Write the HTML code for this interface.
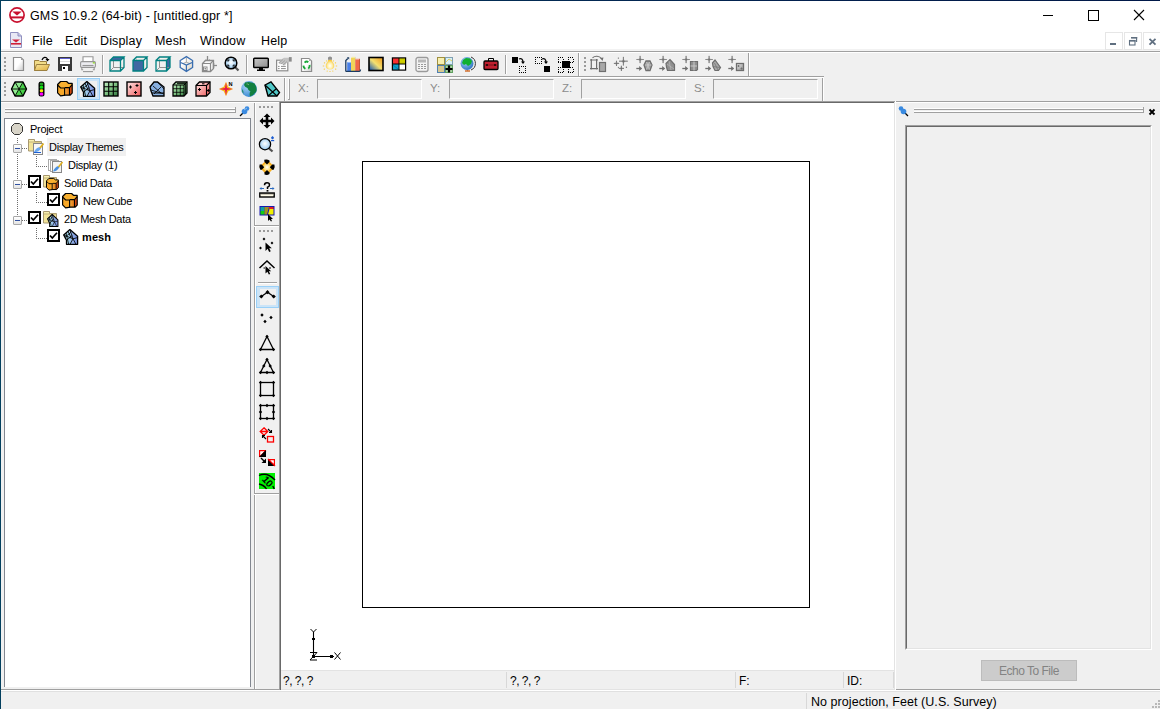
<!DOCTYPE html>
<html><head><meta charset="utf-8">
<style>
*{box-sizing:border-box;margin:0;padding:0}
html,body{width:1160px;height:709px;overflow:hidden;background:#f0f0f0;font-family:"Liberation Sans",sans-serif;font-size:12px;color:#000}
.a{position:absolute}
.t{white-space:nowrap;line-height:14px}
svg{overflow:visible}
</style></head><body>

<div class="a" style="left:0px;top:0px;width:1160px;height:30px;background:#fff"></div>
<div class="a" style="left:0px;top:0px;width:1160px;height:1px;background:linear-gradient(90deg,#033f5e,#02204e 70%,#001848)"></div>
<div class="a" style="left:0px;top:0px;width:1px;height:709px;background:#033f5e"></div>
<svg class="a" style="left:9px;top:7px" width="16" height="16" viewBox="0 0 16 16"><circle cx="8" cy="8" r="7.1" fill="none" stroke="#c8102e" stroke-width="1.7"/>
<path d="M3.2,4.6 H12.8 L8,8.6 Z" fill="#c8102e"/><rect x="1.5" y="9.4" width="13" height="2" fill="#c8102e"/></svg>
<div class="a t" style="left:30px;top:9px;font-size:12.5px;letter-spacing:0.12px;color:#000">GMS 10.9.2 (64-bit) - [untitled.gpr *]</div>
<div class="a" style="left:1043px;top:15px;width:10px;height:1px;background:#000"></div>
<div class="a" style="left:1088px;top:10px;width:11px;height:11px;border:1px solid #000"></div>
<svg class="a" style="left:1133px;top:9px" width="12" height="12" viewBox="0 0 12 12"><path d="M1,1 L11,11 M11,1 L1,11" stroke="#000" stroke-width="1.1" fill="none"/></svg>
<div class="a" style="left:1px;top:30px;width:1159px;height:21px;background:#fff"></div>
<div class="a" style="left:1px;top:49px;width:1159px;height:1px;background:#f2f2f2"></div>
<div class="a" style="left:1px;top:50px;width:1159px;height:1px;background:#f4f4f4"></div>
<svg class="a" style="left:9px;top:32px" width="14" height="16" viewBox="0 0 14 16"><path d="M1.5,0.5 H9 L12.5,4 V15.5 H1.5 Z" fill="#e8e8f4" stroke="#9090c0" stroke-width="1"/>
<path d="M9,0.5 V4 H12.5" fill="#c8c8e8" stroke="#9090c0"/>
<path d="M3,7.5 H11 L7,10.5 Z" fill="#d0203a"/><rect x="2" y="11" width="10" height="1.6" fill="#d0203a"/></svg>
<div class="a t" style="left:32px;top:34px;font-size:12.5px;letter-spacing:0.15px">File</div>
<div class="a t" style="left:65px;top:34px;font-size:12.5px;letter-spacing:0.15px">Edit</div>
<div class="a t" style="left:100px;top:34px;font-size:12.5px;letter-spacing:0.15px">Display</div>
<div class="a t" style="left:155px;top:34px;font-size:12.5px;letter-spacing:0.15px">Mesh</div>
<div class="a t" style="left:200px;top:34px;font-size:12.5px;letter-spacing:0.15px">Window</div>
<div class="a t" style="left:261px;top:34px;font-size:12.5px;letter-spacing:0.15px">Help</div>
<div class="a" style="left:1105px;top:32px;width:18px;height:18px;border:1px solid #e6e6e6;background:#fff"></div>
<div class="a" style="left:1124px;top:32px;width:18px;height:18px;border:1px solid #e6e6e6;background:#fff"></div>
<div class="a" style="left:1143px;top:32px;width:18px;height:18px;border:1px solid #e6e6e6;background:#fff"></div>
<svg class="a" style="left:1105px;top:32px" width="18" height="18" viewBox="0 0 18 18"><rect x="5" y="11" width="6" height="2" fill="#5f6f80"/></svg>
<svg class="a" style="left:1124px;top:32px" width="18" height="18" viewBox="0 0 18 18"><path d="M7.5,5.6 H12.6 V10" fill="none" stroke="#5f6f80" stroke-width="1.1"/><rect x="5.5" y="8.5" width="5.5" height="4.5" fill="none" stroke="#5f6f80" stroke-width="1.1"/><rect x="5" y="8" width="6.5" height="1.6" fill="#5f6f80"/><rect x="7" y="5" width="6.2" height="1.5" fill="#5f6f80"/></svg>
<svg class="a" style="left:1143px;top:32px" width="18" height="18" viewBox="0 0 18 18"><path d="M6.5,6.8 L12.5,12.6 M12.5,6.8 L6.5,12.6" stroke="#5f6f80" stroke-width="1.8" fill="none"/></svg>
<div class="a" style="left:1px;top:51px;width:1159px;height:1px;background:#a0a0a0"></div>
<div class="a" style="left:1px;top:52px;width:1159px;height:1px;background:#fff"></div>
<div class="a" style="left:1px;top:76px;width:823px;height:1px;background:#a0a0a0"></div>
<div class="a" style="left:1px;top:77px;width:823px;height:1px;background:#fff"></div>
<div class="a" style="left:1px;top:101px;width:1159px;height:1px;background:#a0a0a0"></div>
<div class="a" style="left:1px;top:102px;width:1159px;height:1px;background:#fff"></div>
<div class="a" style="left:578px;top:53px;width:1px;height:23px;background:#a0a0a0"></div>
<div class="a" style="left:579px;top:53px;width:1px;height:23px;background:#fff"></div>
<div class="a" style="left:748px;top:53px;width:1px;height:23px;background:#a0a0a0"></div>
<div class="a" style="left:749px;top:53px;width:1px;height:23px;background:#fff"></div>
<div class="a" style="left:284px;top:78px;width:1px;height:23px;background:#a0a0a0"></div>
<div class="a" style="left:285px;top:78px;width:1px;height:23px;background:#fff"></div>
<div class="a" style="left:822px;top:78px;width:1px;height:23px;background:#a0a0a0"></div>
<div class="a" style="left:823px;top:78px;width:1px;height:23px;background:#fff"></div>
<div class="a" style="left:4px;top:57px;width:2px;height:2px;background:#9a9a9a"></div>
<div class="a" style="left:4px;top:61px;width:2px;height:2px;background:#9a9a9a"></div>
<div class="a" style="left:4px;top:65px;width:2px;height:2px;background:#9a9a9a"></div>
<div class="a" style="left:4px;top:69px;width:2px;height:2px;background:#9a9a9a"></div>
<div class="a" style="left:4px;top:82px;width:2px;height:2px;background:#9a9a9a"></div>
<div class="a" style="left:4px;top:86px;width:2px;height:2px;background:#9a9a9a"></div>
<div class="a" style="left:4px;top:90px;width:2px;height:2px;background:#9a9a9a"></div>
<div class="a" style="left:4px;top:94px;width:2px;height:2px;background:#9a9a9a"></div>
<div class="a" style="left:584px;top:57px;width:2px;height:2px;background:#9a9a9a"></div>
<div class="a" style="left:584px;top:61px;width:2px;height:2px;background:#9a9a9a"></div>
<div class="a" style="left:584px;top:65px;width:2px;height:2px;background:#9a9a9a"></div>
<div class="a" style="left:584px;top:69px;width:2px;height:2px;background:#9a9a9a"></div>
<div class="a" style="left:102px;top:55px;width:1px;height:19px;background:#a0a0a0"></div>
<div class="a" style="left:103px;top:55px;width:1px;height:19px;background:#fff"></div>
<div class="a" style="left:246px;top:55px;width:1px;height:19px;background:#a0a0a0"></div>
<div class="a" style="left:247px;top:55px;width:1px;height:19px;background:#fff"></div>
<div class="a" style="left:505px;top:55px;width:1px;height:19px;background:#a0a0a0"></div>
<div class="a" style="left:506px;top:55px;width:1px;height:19px;background:#fff"></div>
<svg width="0" height="0" style="position:absolute"><defs>
<linearGradient id="gdoc" x1="0" y1="0" x2="1" y2="1"><stop offset="0.5" stop-color="#fff"/><stop offset="1" stop-color="#c8c8c8"/></linearGradient>
<linearGradient id="gfold" x1="0" y1="0" x2="1" y2="1"><stop offset="0" stop-color="#f8e49a"/><stop offset="1" stop-color="#e0b040"/></linearGradient>
<linearGradient id="gscr" x1="0" y1="0" x2="1" y2="1"><stop offset="0" stop-color="#c8c8c8"/><stop offset="1" stop-color="#8c8c8c"/></linearGradient>
<linearGradient id="gcream" x1="0" y1="0" x2="1" y2="1"><stop offset="0.3" stop-color="#fff"/><stop offset="1" stop-color="#d8d0c0"/></linearGradient>
<linearGradient id="grad3" x1="0" y1="1" x2="1" y2="0"><stop offset="0.05" stop-color="#1a58b0"/><stop offset="0.5" stop-color="#f4e070"/><stop offset="1" stop-color="#f09818"/></linearGradient>
<radialGradient id="gbulb"><stop offset="0" stop-color="#fff"/><stop offset="0.6" stop-color="#ffe890"/><stop offset="1" stop-color="#f5c842"/></radialGradient>
<radialGradient id="gglobe" cx="0.4" cy="0.35" r="0.7"><stop offset="0" stop-color="#a8d8f8"/><stop offset="1" stop-color="#2a70c0"/></radialGradient>
<radialGradient id="glens" cx="0.5" cy="0.45" r="0.6"><stop offset="0" stop-color="#fff"/><stop offset="1" stop-color="#8cc4f0"/></radialGradient>
<linearGradient id="gpink" x1="0" y1="0" x2="1" y2="1"><stop offset="0" stop-color="#fde8e8"/><stop offset="1" stop-color="#f05858"/></linearGradient>
<linearGradient id="ggreen" x1="0" y1="0" x2="1" y2="1"><stop offset="0" stop-color="#c8f4c8"/><stop offset="0.5" stop-color="#7cc080"/><stop offset="1" stop-color="#2a7038"/></linearGradient>
<linearGradient id="gorange" x1="0" y1="0" x2="1" y2="0"><stop offset="0" stop-color="#f8b040"/><stop offset="1" stop-color="#e07010"/></linearGradient>
<linearGradient id="ggray" x1="0" y1="0" x2="1" y2="1"><stop offset="0" stop-color="#e8e8e8"/><stop offset="1" stop-color="#909090"/></linearGradient>
</defs></svg>
<svg class="a" style="left:11px;top:56px" width="16" height="16" viewBox="0 0 16 16"><path d="M2.5,1.5 H10 L12.5,4 V14.5 H2.5 Z" fill="url(#gdoc)" stroke="#8c8c8c" stroke-width="1.2"/><path d="M10,1.5 L12.5,4 H10Z" fill="#a0a0a0"/></svg>
<svg class="a" style="left:34px;top:56px" width="16" height="16" viewBox="0 0 16 16"><path d="M0.5,4.5 H5 L6,5.5 H12.5 V14.5 H0.5 Z" fill="#f2dc88" stroke="#9c8040"/>
<path d="M2.5,8.5 H15.5 L13,14.5 H0.5 Z" fill="url(#gfold)" stroke="#9c8040"/>
<path d="M8,4 C9,1 12,0.5 13.5,3" fill="none" stroke="#000" stroke-width="1.2"/><path d="M11.5,3 H15.5 L13.5,5.5 Z" fill="#000"/></svg>
<svg class="a" style="left:57px;top:56px" width="16" height="16" viewBox="0 0 16 16"><rect x="1" y="1" width="14" height="14" fill="#3a3a3a"/>
<rect x="3" y="2" width="10" height="6" fill="#fff"/><rect x="3" y="2" width="10" height="1" fill="#6060d0"/>
<rect x="3" y="5" width="10" height="0.6" fill="#c0c0c0"/>
<rect x="5" y="10" width="6" height="5" fill="#fff"/><rect x="6" y="11" width="2" height="2" fill="#000"/></svg>
<svg class="a" style="left:80px;top:56px" width="16" height="16" viewBox="0 0 16 16"><path d="M3,5.5 V0.8 H13 V5.5" fill="#fff" stroke="#969696" stroke-width="1.1"/>
<rect x="0.6" y="5.6" width="14.8" height="5.8" rx="1.2" fill="#ececf0" stroke="#969696" stroke-width="1.1"/>
<path d="M2.5,9.5 H13.5" stroke="#969696" stroke-width="1.1"/>
<path d="M1.8,11 V13.8 H3.2 M14.2,11 V13.8 H12.8" stroke="#969696" stroke-width="1.1" fill="none"/>
<path d="M3,15.6 H13" stroke="#969696" stroke-width="1.1"/>
<rect x="12.8" y="6.2" width="2" height="1.3" fill="#8cd820"/></svg>
<svg class="a" style="left:109px;top:56px" width="16" height="16" viewBox="0 0 16 16"><path d="M1,15 V4.5 H11.5 V15 Z" fill="#fff" fill-opacity="0.0"/>
<path d="M11.5,4.5 L15,1 V11.5 L11.5,15 Z" fill="url(#gcream)" fill-opacity="0.5"/>
<path d="M4.5,1 V11.5 L1,15 M4.5,11.5 H15" stroke="#909090" fill="none"/>
<path d="M1,4.5 L4.5,1 H15 L11.5,4.5 Z" fill="#3f67a2" fill-opacity="1"/>
<path d="M1,15 V4.5 H11.5 V15 Z M1,4.5 L4.5,1 H15 L11.5,4.5 M15,1 V11.5 L11.5,15" fill="none" stroke="#008080" stroke-width="1.3"/></svg>
<svg class="a" style="left:132px;top:56px" width="16" height="16" viewBox="0 0 16 16"><path d="M1,15 V4.5 H11.5 V15 Z" fill="#3f67a2" fill-opacity="1"/>
<path d="M11.5,4.5 L15,1 V11.5 L11.5,15 Z" fill="url(#gcream)" fill-opacity="0.5"/>
<path d="M4.5,1 V4.5" stroke="#909090"/>
<path d="M1,4.5 L4.5,1 H15 L11.5,4.5 Z" fill="url(#gcream)" fill-opacity="0.6"/>
<path d="M1,15 V4.5 H11.5 V15 Z M1,4.5 L4.5,1 H15 L11.5,4.5 M15,1 V11.5 L11.5,15" fill="none" stroke="#008080" stroke-width="1.3"/></svg>
<svg class="a" style="left:155px;top:56px" width="16" height="16" viewBox="0 0 16 16"><path d="M1,15 V4.5 H11.5 V15 Z" fill="#fff" fill-opacity="0.0"/>
<path d="M11.5,4.5 L15,1 V11.5 L11.5,15 Z" fill="#3f67a2" fill-opacity="1"/>
<path d="M4.5,1 V11.5 L1,15 M4.5,11.5 H15" stroke="#909090" fill="none"/>
<path d="M1,4.5 L4.5,1 H15 L11.5,4.5 Z" fill="url(#gcream)" fill-opacity="0.6"/>
<path d="M1,15 V4.5 H11.5 V15 Z M1,4.5 L4.5,1 H15 L11.5,4.5 M15,1 V11.5 L11.5,15" fill="none" stroke="#008080" stroke-width="1.3"/></svg>
<svg class="a" style="left:178px;top:56px" width="16" height="16" viewBox="0 0 16 16"><path d="M8.4,0.6 L14.6,4.5 V11.5 L8.4,15.4 L2.2,11.5 V4.5 Z" fill="url(#gcream)"/>
<path d="M8.4,1.5 V6.3 M5,7.5 L8.4,6.3 L11.8,7.5" stroke="#a0a0a0" stroke-width="0.9" fill="none"/>
<path d="M8.4,0.6 L14.6,4.5 V11.5 L8.4,15.4 L2.2,11.5 V4.5 Z" fill="none" stroke="#3a6eb0" stroke-width="1.3"/>
<path d="M2.6,6.5 L8.4,9 L14.2,6.5 M8.4,9 V15.2" stroke="#3a6eb0" stroke-width="1.2" fill="none"/></svg>
<svg class="a" style="left:201px;top:56px" width="16" height="16" viewBox="0 0 16 16"><path d="M6.5,0 V5" stroke="#8a8a8a" stroke-width="1.3"/>
<path d="M1.5,15.5 V7.5 L4.5,4.5 H12.5 V12.5 L9.5,15.5 Z" fill="#f8f8f8" stroke="#8a8a8a" stroke-width="1.3"/>
<path d="M1.5,7.5 H9.5 V15.5 M9.5,7.5 L12.5,4.5" stroke="#8a8a8a" stroke-width="1.2" fill="none"/>
<path d="M4.5,4.5 H8.5 V3.5 M4,5 L5,3.5" stroke="#8a8a8a" stroke-width="1" fill="none"/>
<rect x="2.5" y="11" width="3.5" height="3.5" fill="#fff" stroke="#8a8a8a"/><rect x="3.5" y="12" width="1.5" height="1.5" fill="#8a8a8a"/>
<path d="M12.5,9.5 H16" stroke="#8a8a8a" stroke-width="1.3"/><path d="M12.5,7 V12" stroke="#8a8a8a" stroke-width="1.5"/></svg>
<svg class="a" style="left:224px;top:56px" width="16" height="16" viewBox="0 0 16 16"><path d="M10,10 L14.5,14.5" stroke="#555" stroke-width="2.2"/>
<circle cx="7" cy="7" r="5.8" fill="url(#glens)" stroke="#000" stroke-width="1.5"/>
<path d="M4,5.5 V4 H5.5 M8.5,4 H10 V5.5 M10,8.5 V10 H8.5 M5.5,10 H4 V8.5" stroke="#000" stroke-width="1.2" fill="none"/></svg>
<svg class="a" style="left:253px;top:56px" width="16" height="16" viewBox="0 0 16 16"><rect x="0.7" y="2.2" width="14.6" height="9.3" rx="0.8" fill="url(#gscr)" stroke="#000" stroke-width="1.4"/>
<rect x="6" y="12" width="4" height="2" fill="#000"/><rect x="4" y="13.5" width="8" height="1.5" fill="#000"/></svg>
<svg class="a" style="left:276px;top:56px" width="16" height="16" viewBox="0 0 16 16"><rect x="0.6" y="4.2" width="11.2" height="10.6" fill="#fff" stroke="#8c8c8c" stroke-width="1.2"/>
<path d="M2,10.4 H3.6 M5,10.4 H9.8 M2,12.6 H3.6 M5,12.6 H9.8" stroke="#8c8c8c" stroke-width="1"/>
<path d="M2.2,6.8 L6,3 L8,1.8 H13 V5.8 L11,6.5 L9,9.2 L7.5,9.5 L6,7.8 L4,8.2 Z" fill="#c4c4c4"/>
<path d="M3,7 L7,3.5 M5,8 L9,4.5 M7,9 L11,5.5" stroke="#9a9a9a" stroke-width="0.8"/>
<rect x="12.9" y="1.1" width="2.8" height="4.5" fill="#8c8c8c"/></svg>
<svg class="a" style="left:299px;top:56px" width="16" height="16" viewBox="0 0 16 16"><path d="M2.5,2.5 H10 L12.6,5 V15.5 H2.5 Z" fill="url(#gdoc)" stroke="#8c8c8c" stroke-width="1.2"/><path d="M10,2.5 L12.6,5 H10Z" fill="#b0b0b0"/>
<path d="M5.6,6.6 Q7.5,4.8 9.3,6.2" stroke="#18a838" stroke-width="1.9" fill="none"/>
<path d="M10.6,9 Q11,11.5 9.3,12.6" stroke="#18a838" stroke-width="1.9" fill="none"/>
<path d="M6.4,12.8 Q4.5,11.8 4.4,9.6" stroke="#18a838" stroke-width="1.9" fill="none"/></svg>
<svg class="a" style="left:322px;top:56px" width="16" height="16" viewBox="0 0 16 16"><g stroke="#f8d050" stroke-width="1.1">
<path d="M2,6.5 L3,7.2 M14,6.5 L13,7.2 M0.8,10 H2.2 M13.8,10 H15.2 M1.8,13.5 L2.8,12.8 M14.2,13.5 L13.2,12.8 M5,15.6 L5.4,14.6 M11,15.6 L10.6,14.6 M8,15.9 V15 M4.3,4.5 L4.9,5.3 M11.7,4.5 L11.1,5.3"/></g>
<radialGradient id="gbulb2" cx="0.5" cy="0.62" r="0.55"><stop offset="0" stop-color="#fff"/><stop offset="0.5" stop-color="#fff0b0"/><stop offset="1" stop-color="#f8c838"/></radialGradient>
<path d="M6.3,3.6 H9.7 Q9.8,5.5 11,6.5 Q12.5,8 12.2,10.5 Q11.5,13.5 8,13.6 Q4.5,13.5 3.8,10.5 Q3.5,8 5,6.5 Q6.2,5.5 6.3,3.6Z" fill="url(#gbulb2)"/>
<path d="M6,3.8 V1.5 Q8,-0.3 10,1.5 V3.8 Z" fill="#909090"/></svg>
<svg class="a" style="left:345px;top:56px" width="16" height="16" viewBox="0 0 16 16"><rect x="2.2" y="6" width="3.8" height="9.2" fill="#4a80e8"/><rect x="2.2" y="6" width="3.8" height="1" fill="#90b8f8"/>
<path d="M6,1.8 L7,0.8 H10.3 L10,1.8Z" fill="#f8f0a0"/><rect x="6" y="1.8" width="4" height="13.4" fill="#f0d458"/><path d="M10,1.8 L10.3,0.8 V14.8 L10,15.2Z" fill="#9a9040"/>
<rect x="10.3" y="3.3" width="3.8" height="11.9" fill="#f06848"/><path d="M14.1,3.3 L15,2.5 V14.5 L14.1,15.2Z" fill="#c04828"/><path d="M10.3,3.3 L11,2.5 H15 L14.1,3.3Z" fill="#f8c0b0"/>
<path d="M0.8,15.4 V4.5 L2.8,2.5" stroke="#1a3a60" stroke-width="1.3" fill="none"/><path d="M1.8,1.2 H4.2 V3.6Z" fill="#1a3a60"/>
<path d="M0.8,15.4 H14.5 Q15.5,15.4 15.5,13.6" stroke="#1a3a60" stroke-width="1.3" fill="none"/></svg>
<svg class="a" style="left:368px;top:56px" width="16" height="16" viewBox="0 0 16 16"><rect x="1" y="1.5" width="14" height="13" fill="url(#grad3)" stroke="#000" stroke-width="1.6"/></svg>
<svg class="a" style="left:391px;top:56px" width="16" height="16" viewBox="0 0 16 16"><rect x="0.8" y="1.3" width="14.4" height="13.4" fill="#000"/>
<rect x="2" y="2.5" width="5.5" height="5" fill="#f83030"/>
<rect x="8.5" y="2.5" width="5.5" height="5" fill="#d8d800"/>
<path d="M8.5,3.5 h5.5 M8.5,5 h5.5 M8.5,6.5 h5.5" stroke="#989800" stroke-width="0.5" stroke-dasharray="1 1"/>
<rect x="2" y="8.5" width="5.5" height="5" fill="#10a0c8"/><path d="M2,9 L7,13" stroke="#0870a0" stroke-width="0.8"/>
<rect x="8.5" y="8.5" width="5.5" height="5" fill="#fff"/></svg>
<svg class="a" style="left:414px;top:56px" width="16" height="16" viewBox="0 0 16 16"><rect x="2" y="1.5" width="12" height="14" rx="2" fill="#f4f4f4" stroke="#9a9a9a" stroke-width="1.3"/>
<rect x="4" y="3.5" width="8" height="3" fill="#b8b8b8"/>
<g fill="#9a9a9a"><rect x="4" y="8" width="2" height="1"/><rect x="7" y="8" width="2" height="1"/><rect x="10" y="8" width="2" height="1"/>
<rect x="4" y="10" width="2" height="1"/><rect x="7" y="10" width="2" height="1"/><rect x="10" y="10" width="2" height="1"/>
<rect x="4" y="12" width="2" height="1"/><rect x="7" y="12" width="2" height="1"/><rect x="10" y="12" width="2" height="1"/></g></svg>
<svg class="a" style="left:437px;top:56px" width="16" height="16" viewBox="0 0 16 16"><rect x="0.5" y="1.5" width="7" height="7" fill="#f8f0b0" stroke="#a09040"/>
<rect x="8.5" y="1.5" width="7" height="7" fill="#d8f0f8" stroke="#80a0b0"/><path d="M9,6 L12,3 L15,5" stroke="#e0d060" fill="none"/>
<rect x="0.5" y="9.5" width="7" height="7" fill="#d8c890" stroke="#5080b0"/>
<rect x="8.5" y="9.5" width="7" height="7" fill="#a8d0a0" stroke="#60a060"/>
<path d="M12,9.5 V16.5 M8.5,13 H15.5" stroke="#000" stroke-width="2.2"/></svg>
<svg class="a" style="left:460px;top:56px" width="16" height="16" viewBox="0 0 16 16"><path d="M11,1 A7,7 0 0 1 11,14" stroke="#333" stroke-width="1" fill="none"/>
<circle cx="7" cy="7.5" r="6.5" fill="url(#gglobe)"/>
<path d="M3,4 L6,2 L10,2.5 L12,5 L11,8 L8,10 L6,8 L4,9 L2,7 Z" fill="#10b030"/>
<path d="M5,15 H10" stroke="#d07030" stroke-width="1.5"/><path d="M7.5,14 V15" stroke="#d07030"/></svg>
<svg class="a" style="left:483px;top:56px" width="16" height="16" viewBox="0 0 16 16"><path d="M5.5,5 V2.5 H10.5 V5" stroke="#000" stroke-width="1" fill="none"/>
<rect x="1" y="5" width="14" height="8.5" rx="1" fill="#c02030" stroke="#000" stroke-width="1.3"/>
<rect x="1.5" y="8.5" width="13" height="1" fill="#801018"/>
<rect x="3" y="8.3" width="2" height="1.4" fill="#000"/><rect x="11" y="8.3" width="2" height="1.4" fill="#000"/></svg>
<svg class="a" style="left:512px;top:56px" width="16" height="16" viewBox="0 0 16 16"><rect x="0" y="1" width="6" height="6" fill="#000"/><g fill="#000"><rect x="7" y="10" width="1" height="1"/><rect x="7" y="16" width="1" height="1"/><rect x="9" y="10" width="1" height="1"/><rect x="9" y="16" width="1" height="1"/><rect x="11" y="10" width="1" height="1"/><rect x="11" y="16" width="1" height="1"/><rect x="13" y="10" width="1" height="1"/><rect x="13" y="16" width="1" height="1"/><rect x="7" y="12" width="1" height="1"/><rect x="13" y="12" width="1" height="1"/><rect x="7" y="14" width="1" height="1"/><rect x="13" y="14" width="1" height="1"/></g><path d="M7,3 C9,2 11,3 11,6" stroke="#000" stroke-width="1.3" fill="none"/><path d="M9,5.5 H13 L11,8 Z" fill="#000"/></svg>
<svg class="a" style="left:535px;top:56px" width="16" height="16" viewBox="0 0 16 16"><g fill="#000"><rect x="0" y="1" width="1" height="1"/><rect x="0" y="7" width="1" height="1"/><rect x="2" y="1" width="1" height="1"/><rect x="2" y="7" width="1" height="1"/><rect x="4" y="1" width="1" height="1"/><rect x="4" y="7" width="1" height="1"/><rect x="6" y="1" width="1" height="1"/><rect x="6" y="7" width="1" height="1"/><rect x="0" y="3" width="1" height="1"/><rect x="6" y="3" width="1" height="1"/><rect x="0" y="5" width="1" height="1"/><rect x="6" y="5" width="1" height="1"/></g><rect x="9" y="10" width="6" height="6" fill="#000"/><path d="M7,3 C9,2 11,3 11,6" stroke="#000" stroke-width="1.3" fill="none"/><path d="M9,5.5 H13 L11,8 Z" fill="#000"/></svg>
<svg class="a" style="left:558px;top:56px" width="16" height="16" viewBox="0 0 16 16"><g fill="#000"><rect x="0" y="1" width="1" height="1"/><rect x="0" y="6" width="1" height="1"/><rect x="2" y="1" width="1" height="1"/><rect x="2" y="6" width="1" height="1"/><rect x="4" y="1" width="1" height="1"/><rect x="4" y="6" width="1" height="1"/><rect x="0" y="3" width="1" height="1"/><rect x="5" y="3" width="1" height="1"/><rect x="0" y="5" width="1" height="1"/><rect x="5" y="5" width="1" height="1"/></g><g fill="#000"><rect x="10" y="1" width="1" height="1"/><rect x="10" y="6" width="1" height="1"/><rect x="12" y="1" width="1" height="1"/><rect x="12" y="6" width="1" height="1"/><rect x="14" y="1" width="1" height="1"/><rect x="14" y="6" width="1" height="1"/><rect x="10" y="3" width="1" height="1"/><rect x="15" y="3" width="1" height="1"/><rect x="10" y="5" width="1" height="1"/><rect x="15" y="5" width="1" height="1"/></g><g fill="#000"><rect x="0" y="11" width="1" height="1"/><rect x="0" y="16" width="1" height="1"/><rect x="2" y="11" width="1" height="1"/><rect x="2" y="16" width="1" height="1"/><rect x="4" y="11" width="1" height="1"/><rect x="4" y="16" width="1" height="1"/><rect x="0" y="13" width="1" height="1"/><rect x="5" y="13" width="1" height="1"/><rect x="0" y="15" width="1" height="1"/><rect x="5" y="15" width="1" height="1"/></g><g fill="#000"><rect x="10" y="11" width="1" height="1"/><rect x="10" y="16" width="1" height="1"/><rect x="12" y="11" width="1" height="1"/><rect x="12" y="16" width="1" height="1"/><rect x="14" y="11" width="1" height="1"/><rect x="14" y="16" width="1" height="1"/><rect x="10" y="13" width="1" height="1"/><rect x="15" y="13" width="1" height="1"/><rect x="10" y="15" width="1" height="1"/><rect x="15" y="15" width="1" height="1"/></g><rect x="4" y="5" width="8" height="7" fill="#000"/></svg>
<svg class="a" style="left:590px;top:56px" width="16" height="16" viewBox="0 0 16 16"><path d="M1.3,3 V13.6 M6.6,3 V13.6 M0,4 H8 M0,12.6 H8" stroke="#6e6e6e" stroke-width="1.2"/>
<rect x="9.5" y="6.5" width="6" height="9" fill="#a8a8a8" stroke="#6e6e6e" stroke-width="1.2"/>
<path d="M2.5,1.8 C5,-0.5 9,-0.3 11.5,2.5" stroke="#6e6e6e" stroke-width="1.1" fill="none"/><path d="M10,2 L13.5,1.5 L12.5,5 Z" fill="#6e6e6e"/></svg>
<svg class="a" style="left:613px;top:56px" width="16" height="16" viewBox="0 0 16 16"><path d="M10.4,0.9000000000000004 C10.4,4.8500000000000005 10.75,5.2 14.7,5.2 C10.75,5.2 10.4,5.55 10.4,9.5 C10.4,5.55 10.05,5.2 6.1000000000000005,5.2 C10.05,5.2 10.4,4.8500000000000005 10.4,0.9000000000000004Z" fill="#6e6e6e" stroke="#6e6e6e" stroke-width="0.66" stroke-linejoin="round"/><path d="M3.5,4.800000000000001 C3.5,7.050000000000001 3.85,7.4 6.1,7.4 C3.85,7.4 3.5,7.75 3.5,10.0 C3.5,7.75 3.15,7.4 0.8999999999999999,7.4 C3.15,7.4 3.5,7.050000000000001 3.5,4.800000000000001Z" fill="#6e6e6e" stroke="#6e6e6e" stroke-width="0.66" stroke-linejoin="round"/><path d="M8.4,9.8 C8.4,12.05 8.75,12.4 11.0,12.4 C8.75,12.4 8.4,12.75 8.4,15.0 C8.4,12.75 8.05,12.4 5.800000000000001,12.4 C8.05,12.4 8.4,12.05 8.4,9.8Z" fill="#6e6e6e" stroke="#6e6e6e" stroke-width="0.66" stroke-linejoin="round"/><circle cx="5.4" cy="2.1" r="0.7" fill="#6e6e6e"/><circle cx="13.4" cy="11.3" r="0.7" fill="#6e6e6e"/><circle cx="5.4" cy="11.3" r="0.6" fill="#6e6e6e"/></svg>
<svg class="a" style="left:636px;top:56px" width="16" height="16" viewBox="0 0 16 16"><path d="M4.1,-0.10000000000000009 C4.1,3.15 4.449999999999999,3.5 7.699999999999999,3.5 C4.449999999999999,3.5 4.1,3.85 4.1,7.1 C4.1,3.85 3.7499999999999996,3.5 0.49999999999999956,3.5 C3.7499999999999996,3.5 4.1,3.15 4.1,-0.10000000000000009Z" fill="#6e6e6e" stroke="#6e6e6e" stroke-width="0.66" stroke-linejoin="round"/><path d="M0.3,12.5 H4" stroke="#6e6e6e" stroke-width="1.3"/><path d="M3.2,10 L6.2,12.5 L3.2,15 Z" fill="#6e6e6e"/><path d="M8,9 L10,5 H14 L16,9 L14,14.5 H10 Z" fill="#a0a0a0" stroke="#6e6e6e" stroke-width="1.3"/><path d="M9,9 H15.5 M10.5,6 L13.5,13.5 M13.5,6 L10.5,13.5" stroke="#d0d0d0" stroke-width="0.7"/></svg>
<svg class="a" style="left:659px;top:56px" width="16" height="16" viewBox="0 0 16 16"><path d="M4.1,-0.10000000000000009 C4.1,3.15 4.449999999999999,3.5 7.699999999999999,3.5 C4.449999999999999,3.5 4.1,3.85 4.1,7.1 C4.1,3.85 3.7499999999999996,3.5 0.49999999999999956,3.5 C3.7499999999999996,3.5 4.1,3.15 4.1,-0.10000000000000009Z" fill="#6e6e6e" stroke="#6e6e6e" stroke-width="0.66" stroke-linejoin="round"/><path d="M0.3,12.5 H4" stroke="#6e6e6e" stroke-width="1.3"/><path d="M3.2,10 L6.2,12.5 L3.2,15 Z" fill="#6e6e6e"/><path d="M7,7.5 L11,3.5 L15.5,8.5 V14.5 H8.5 L7.5,11 Z" fill="#909090" stroke="#6e6e6e" stroke-width="1.2"/><path d="M8,8 L15,13 M10,5 L12,14" stroke="#c0c0c0" stroke-width="0.6"/></svg>
<svg class="a" style="left:682px;top:56px" width="16" height="16" viewBox="0 0 16 16"><path d="M4.1,-0.10000000000000009 C4.1,3.15 4.449999999999999,3.5 7.699999999999999,3.5 C4.449999999999999,3.5 4.1,3.85 4.1,7.1 C4.1,3.85 3.7499999999999996,3.5 0.49999999999999956,3.5 C3.7499999999999996,3.5 4.1,3.15 4.1,-0.10000000000000009Z" fill="#6e6e6e" stroke="#6e6e6e" stroke-width="0.66" stroke-linejoin="round"/><path d="M0.3,12.5 H4" stroke="#6e6e6e" stroke-width="1.3"/><path d="M3.2,10 L6.2,12.5 L3.2,15 Z" fill="#6e6e6e"/><path d="M8.5,5.5 H15.5 V13.5 L14.5,14.5 H8.5 Z" fill="#909090" stroke="#6e6e6e" stroke-width="1.2"/><path d="M8.5,10 H15 M12,5.5 V14.5" stroke="#c8c8c8" stroke-width="1"/></svg>
<svg class="a" style="left:705px;top:56px" width="16" height="16" viewBox="0 0 16 16"><path d="M4.1,-0.10000000000000009 C4.1,3.15 4.449999999999999,3.5 7.699999999999999,3.5 C4.449999999999999,3.5 4.1,3.85 4.1,7.1 C4.1,3.85 3.7499999999999996,3.5 0.49999999999999956,3.5 C3.7499999999999996,3.5 4.1,3.15 4.1,-0.10000000000000009Z" fill="#6e6e6e" stroke="#6e6e6e" stroke-width="0.66" stroke-linejoin="round"/><path d="M0.3,12.5 H4" stroke="#6e6e6e" stroke-width="1.3"/><path d="M3.2,10 L6.2,12.5 L3.2,15 Z" fill="#6e6e6e"/><path d="M7.5,7 L10,4 L15.5,11.5 L13.5,14.5 H10 L8,10.5 Z" fill="#a8a8a8" stroke="#6e6e6e" stroke-width="1.2"/><path d="M8,10.5 L15,11.5 M9.5,7 L13,14" stroke="#6e6e6e" stroke-width="0.7"/></svg>
<svg class="a" style="left:728px;top:56px" width="16" height="16" viewBox="0 0 16 16"><path d="M4.1,-0.10000000000000009 C4.1,3.15 4.449999999999999,3.5 7.699999999999999,3.5 C4.449999999999999,3.5 4.1,3.85 4.1,7.1 C4.1,3.85 3.7499999999999996,3.5 0.49999999999999956,3.5 C3.7499999999999996,3.5 4.1,3.15 4.1,-0.10000000000000009Z" fill="#6e6e6e" stroke="#6e6e6e" stroke-width="0.66" stroke-linejoin="round"/><path d="M0.3,12.5 H4" stroke="#6e6e6e" stroke-width="1.3"/><path d="M3.2,10 L6.2,12.5 L3.2,15 Z" fill="#6e6e6e"/><rect x="8.5" y="7.5" width="7" height="7" fill="url(#ggray)" stroke="#6e6e6e" stroke-width="1.3"/><path d="M10.5,9 v2 M9.5,10 h2 M13.5,11.5 v2 M12.5,12.5 h2" stroke="#6e6e6e" stroke-width="0.9"/></svg>
<svg class="a" style="left:11px;top:81px" width="16" height="16" viewBox="0 0 16 16"><path d="M4,1 H12 L15.5,8 L12,15 H4 L0.5,8 Z" fill="#48d048"/>
<path d="M4,1 H12 L8,8Z M0.5,8 L4,1 L8,8Z M0.5,8 H8 L4,15Z" fill="#90ec90"/>
<path d="M4,1 L12,15 M12,1 L4,15 M0.5,8 H15.5" stroke="#000" stroke-width="0.9"/>
<path d="M4,1 H12 L15.5,8 L12,15 H4 L0.5,8 Z" fill="none" stroke="#000" stroke-width="1.4" stroke-linejoin="round"/></svg>
<svg class="a" style="left:34px;top:81px" width="16" height="16" viewBox="0 0 16 16"><rect x="4.5" y="0.5" width="6" height="15" rx="2.5" fill="#000"/>
<rect x="5.8" y="1.8" width="3.4" height="2.6" rx="1" fill="#20a020"/>
<rect x="5.8" y="4.8" width="3.4" height="3" rx="1.2" fill="#10e010"/>
<rect x="5.8" y="8.3" width="3.4" height="3" rx="1.2" fill="#f0f000"/>
<rect x="5.8" y="11.6" width="3.4" height="3" rx="1.2" fill="#ff00ff"/></svg>
<svg class="a" style="left:57px;top:81px" width="16" height="16" viewBox="0 0 16 16"><path d="M3.6,0.5 H9.6 L11.5,2.3 H15.2 V12.1 L13,14.2 H8.4 L3.6,14.9 L0.6,11.8 V3.5 Z" fill="#f8b030"/>
<path d="M0.6,4 L3.6,7 H7.6 V14.6 H3.6 L0.6,11.8Z" fill="#f8a828"/>
<path d="M7.6,7 L8.4,6.6 H12.5 V14 H8.4 L7.6,14.6Z" fill="url(#gorange)"/>
<path d="M12.5,6.5 L15.2,3.6 V12.1 L13,14 H12.5Z" fill="#d84a10"/>
<path d="M3.6,0.5 H9.6 L11.5,2.3 H15.2 V12.1 L13,14.2 H8.4 L3.6,14.9 L0.6,11.8 V3.5 Z" fill="none" stroke="#000" stroke-width="1.2" stroke-linejoin="round"/>
<path d="M0.6,4 L3.6,7 H7.6 L8.4,6.6 H12.5 L15.2,3.6 M7.6,7 V14.6 M12.5,6.6 V14" stroke="#000" stroke-width="1.1" fill="none"/></svg>
<div class="a" style="left:77px;top:78px;width:23px;height:22px;border:1px solid #99d0f8;background:#cce4f7"></div>
<div class="a" style="left:80px;top:81px;width:17px;height:16px;background:#f0f0f0"></div>
<svg class="a" style="left:80px;top:81px" width="16" height="16" viewBox="0 0 16 16"><linearGradient id="gmesh" x1="0" y1="0" x2="1" y2="0"><stop offset="0.3" stop-color="#a8dcf0"/><stop offset="0.6" stop-color="#90b0e8"/><stop offset="1" stop-color="#7890e0"/></linearGradient>
<path d="M6.9,0.6 L14.6,7.3 V15.3 H3.5 V11.3 L0.7,6 Z" fill="url(#gmesh)" stroke="#000" stroke-width="1.3" stroke-linejoin="round"/>
<path d="M0.7,6 L10,9.8 M6.9,0.6 L10,9.8 M10,9.8 L14.5,8.6 M10,9.8 L13,15.3 M10,9.8 L7,15.3 M3,4 L5.6,15 M5,2.3 L8.2,9 M1.8,8.5 L8,3.2 M3.5,11.3 L9.3,6.5" stroke="#000" stroke-width="0.85" fill="none"/></svg>
<svg class="a" style="left:103px;top:81px" width="16" height="16" viewBox="0 0 16 16"><rect x="1" y="1" width="14" height="14" fill="url(#ggreen)" stroke="#000" stroke-width="1.4"/>
<path d="M5.7,1 V15 M10.3,1 V15 M1,5.7 H15 M1,10.3 H15" stroke="#000" stroke-width="1.1"/></svg>
<svg class="a" style="left:126px;top:81px" width="16" height="16" viewBox="0 0 16 16"><rect x="1" y="1" width="14" height="14" fill="url(#gpink)" stroke="#000" stroke-width="1.4"/><rect x="3.0" y="5.5" width="3" height="1" fill="#000"/><rect x="4.0" y="4.5" width="1" height="3" fill="#000"/><rect x="9.5" y="4.0" width="3" height="1" fill="#000"/><rect x="10.5" y="3.0" width="1" height="3" fill="#000"/><rect x="8.0" y="11.0" width="3" height="1" fill="#000"/><rect x="9.0" y="10.0" width="1" height="3" fill="#000"/></svg>
<svg class="a" style="left:149px;top:81px" width="16" height="16" viewBox="0 0 16 16"><path d="M1,6 L5,1 H8.5 L15,6 V15 H4 L2,10 Z" fill="#88b0e0" stroke="#000" stroke-width="1.3"/>
<path d="M8.5,1 L15,8 M2,9 L15,13 M4,5 L12,12 M12,6 L5,13" stroke="#000" stroke-width="0.8" fill="none"/>
<path d="M3,12 H15" stroke="#000" stroke-width="1"/></svg>
<svg class="a" style="left:172px;top:81px" width="16" height="16" viewBox="0 0 16 16"><path d="M1,4 L4,1 H15 V12 L12,15 H1 Z" fill="url(#ggreen)" stroke="#000" stroke-width="1.3"/>
<path d="M1,4 H12 V15 M12,4 L15,1" stroke="#000" stroke-width="1" fill="none"/>
<path d="M4.7,4 V15 M8.3,4 V15 M1,7.7 H12 M1,11.3 H12 M13.5,2.5 V13.5 M5,2.5 H13" stroke="#000" stroke-width="0.8" fill="none"/></svg>
<svg class="a" style="left:195px;top:81px" width="16" height="16" viewBox="0 0 16 16"><path d="M1,4.5 L4.5,1 H15 V11.5 L11.5,15 H1 Z" fill="url(#gpink)" stroke="#000" stroke-width="1.3"/>
<path d="M1,4.5 H11.5 V15 M11.5,4.5 L15,1" stroke="#000" stroke-width="1.1" fill="none"/>
<path d="M7,2.8 h2.5" stroke="#000" stroke-width="1"/><rect x="3.0" y="8.0" width="3" height="1" fill="#000"/><rect x="4.0" y="7.0" width="1" height="3" fill="#000"/><rect x="11.8" y="9.0" width="3" height="1" fill="#000"/><rect x="12.8" y="8.0" width="1" height="3" fill="#000"/></svg>
<svg class="a" style="left:218px;top:81px" width="16" height="16" viewBox="0 0 16 16"><path d="M8,1 L10.3,5.7 L15,8 L10.3,10.3 L8,15 L5.7,10.3 L1,8 L5.7,5.7 Z" fill="#f8b818"/>
<path d="M8,1 L9,7 L15,8 L9,9 L8,15 L7,9 L1,8 L7,7 Z" fill="#e8184a"/>
<text x="10.6" y="4.6" font-size="5.6" font-weight="bold" font-family="Liberation Sans" fill="#000">N</text></svg>
<svg class="a" style="left:241px;top:81px" width="16" height="16" viewBox="0 0 16 16"><radialGradient id="gg2" cx="0.35" cy="0.35" r="0.75"><stop offset="0" stop-color="#a8d4f4"/><stop offset="1" stop-color="#2a80d0"/></radialGradient>
<circle cx="8" cy="8" r="7.9" fill="url(#gg2)"/>
<path d="M4,1.5 Q9,0 13.5,2.5 Q16,6 15.5,10 Q13,14.5 9,15.5 Q8,12 9.5,10.5 Q7,9.5 6.5,7 Q4,6.5 3,4 Z" fill="#128040"/>
<path d="M1,8 Q3,10 2.5,13 Q1,11 1,8Z" fill="#128040"/>
<path d="M5.5,3 Q7,2.5 8,4" stroke="#70b070" stroke-width="1" fill="none"/></svg>
<svg class="a" style="left:264px;top:81px" width="16" height="16" viewBox="0 0 16 16"><path d="M1,4 L7,0.8 L15.5,11.5 L13,15 H4 Z" fill="#50c8c8" stroke="#000" stroke-width="1.4"/>
<path d="M1,4 L13,15 M4,15 L12,8" stroke="#000" stroke-width="1.1"/></svg>
<div class="a" style="left:288px;top:79px;width:1px;height:21px;background:#fff"></div>
<div class="a" style="left:289px;top:79px;width:1px;height:21px;background:#a0a0a0"></div>
<div class="a" style="left:288px;top:99px;width:2px;height:1px;background:#a0a0a0"></div>
<div class="a t" style="left:298px;top:81px;font-size:11.5px;color:#8c8c8c">X:</div>
<div class="a" style="left:317px;top:79px;width:105px;height:20px;border-top:1px solid #a0a0a0;border-left:1px solid #a0a0a0;border-right:1px solid #fff;border-bottom:1px solid #fff"></div>
<div class="a t" style="left:430px;top:81px;font-size:11.5px;color:#8c8c8c">Y:</div>
<div class="a" style="left:449px;top:79px;width:105px;height:20px;border-top:1px solid #a0a0a0;border-left:1px solid #a0a0a0;border-right:1px solid #fff;border-bottom:1px solid #fff"></div>
<div class="a t" style="left:562px;top:81px;font-size:11.5px;color:#8c8c8c">Z:</div>
<div class="a" style="left:581px;top:79px;width:105px;height:20px;border-top:1px solid #a0a0a0;border-left:1px solid #a0a0a0;border-right:1px solid #fff;border-bottom:1px solid #fff"></div>
<div class="a t" style="left:694px;top:81px;font-size:11.5px;color:#8c8c8c">S:</div>
<div class="a" style="left:713px;top:79px;width:105px;height:20px;border-top:1px solid #a0a0a0;border-left:1px solid #a0a0a0;border-right:1px solid #fff;border-bottom:1px solid #fff"></div>
<div class="a" style="left:5px;top:108px;width:231px;height:1px;background:#fff"></div>
<div class="a" style="left:5px;top:109px;width:231px;height:1px;background:#a0a0a0"></div>
<div class="a" style="left:5px;top:111px;width:231px;height:1px;background:#fff"></div>
<div class="a" style="left:5px;top:112px;width:231px;height:1px;background:#a0a0a0"></div>
<div class="a" style="left:235px;top:107px;width:1px;height:6px;background:#a0a0a0"></div>
<svg class="a" style="left:239px;top:105px" width="11" height="12" viewBox="0 0 11 12"><path d="M1,11 L4,8" stroke="#000" stroke-width="1.3"/>
<circle cx="8" cy="3.5" r="2.3" fill="#3a8ae0"/><circle cx="5.5" cy="6.5" r="2.8" fill="#3a8ae0"/>
<path d="M5,5 L8,3" stroke="#8cc0f0" stroke-width="1"/></svg>
<div class="a" style="left:4px;top:118px;width:247px;height:569px;background:#fff;border:1px solid #828790;border-bottom:0"></div>
<div class="a" style="left:254px;top:103px;width:1px;height:586px;background:#a0a0a0"></div>
<div class="a" style="left:255px;top:103px;width:1px;height:586px;background:#fff"></div>
<div class="a" style="left:254px;top:225px;width:25px;height:1px;background:#a0a0a0"></div>
<div class="a" style="left:254px;top:226px;width:25px;height:1px;background:#fff"></div>
<div class="a" style="left:254px;top:493px;width:25px;height:1px;background:#a0a0a0"></div>
<div class="a" style="left:254px;top:494px;width:25px;height:1px;background:#fff"></div>
<div class="a" style="left:259px;top:106px;width:2px;height:2px;background:#9a9a9a"></div>
<div class="a" style="left:263px;top:106px;width:2px;height:2px;background:#9a9a9a"></div>
<div class="a" style="left:267px;top:106px;width:2px;height:2px;background:#9a9a9a"></div>
<div class="a" style="left:271px;top:106px;width:2px;height:2px;background:#9a9a9a"></div>
<div class="a" style="left:259px;top:230px;width:2px;height:2px;background:#9a9a9a"></div>
<div class="a" style="left:263px;top:230px;width:2px;height:2px;background:#9a9a9a"></div>
<div class="a" style="left:267px;top:230px;width:2px;height:2px;background:#9a9a9a"></div>
<div class="a" style="left:271px;top:230px;width:2px;height:2px;background:#9a9a9a"></div>
<div class="a" style="left:1px;top:689px;width:895px;height:1px;background:#a0a0a0"></div>
<div class="a" style="left:1px;top:690px;width:895px;height:1px;background:#fff"></div>
<div class="a" style="left:279px;top:101px;width:1px;height:589px;background:#a0a0a0"></div>
<div class="a" style="left:280px;top:101px;width:1px;height:589px;background:#696969"></div>
<div class="a" style="left:279px;top:101px;width:616px;height:1px;background:#a0a0a0"></div>
<div class="a" style="left:280px;top:102px;width:615px;height:1px;background:#696969"></div>
<div class="a" style="left:281px;top:103px;width:613px;height:567px;background:#fff"></div>
<div class="a" style="left:894px;top:102px;width:1px;height:587px;background:#e3e3e3"></div>
<div class="a" style="left:895px;top:101px;width:1px;height:589px;background:#fff"></div>
<div class="a" style="left:281px;top:689px;width:614px;height:1px;background:#e3e3e3"></div>
<div class="a" style="left:279px;top:690px;width:617px;height:1px;background:#fff"></div>
<div class="a" style="left:281px;top:670px;width:613px;height:1px;background:#e3e3e3"></div>
<div class="a" style="left:506px;top:672px;width:1px;height:16px;background:#d8d8d8"></div>
<div class="a" style="left:735px;top:672px;width:1px;height:16px;background:#d8d8d8"></div>
<div class="a" style="left:843px;top:672px;width:1px;height:16px;background:#d8d8d8"></div>
<div class="a" style="left:893px;top:672px;width:1px;height:16px;background:#d8d8d8"></div>
<div class="a t" style="left:283px;top:674px;font-size:12px;letter-spacing:-0.5px">?, ?, ?</div>
<div class="a t" style="left:510px;top:674px;font-size:12px;letter-spacing:-0.5px">?, ?, ?</div>
<div class="a t" style="left:739px;top:674px;font-size:12px">F:</div>
<div class="a t" style="left:847px;top:674px;font-size:12px">ID:</div>
<div class="a" style="left:362px;top:161px;width:448px;height:447px;border:1px solid #000"></div>
<svg class="a" style="left:300px;top:620px" width="50" height="50" viewBox="0 0 50 50"><path d="M13.5,12 V36.5 H34" stroke="#000" stroke-width="1.1" fill="none"/>
<path d="M10.5,9 L13.5,12 L16.5,9" stroke="#000" fill="none"/>
<rect x="12" y="18" width="3" height="2" fill="#000"/><rect x="30" y="35" width="3" height="3" fill="#000"/>
<rect x="12" y="35" width="3" height="3" fill="#000"/>
<path d="M34.5,32.5 L40.5,39.5 M40.5,32.5 L34.5,39.5" stroke="#000" fill="none"/>
<path d="M10,32.5 H17 L10,40 H17" stroke="#000" fill="none"/></svg>
<div class="a" style="left:914px;top:108px;width:229px;height:1px;background:#fff"></div>
<div class="a" style="left:914px;top:109px;width:229px;height:1px;background:#a0a0a0"></div>
<div class="a" style="left:914px;top:111px;width:229px;height:1px;background:#fff"></div>
<div class="a" style="left:914px;top:112px;width:229px;height:1px;background:#a0a0a0"></div>
<div class="a" style="left:1143px;top:107px;width:1px;height:6px;background:#a0a0a0"></div>
<svg class="a" style="left:898px;top:105px" width="11" height="12" viewBox="0 0 11 12"><path d="M10,11 L7,8" stroke="#000" stroke-width="1.3"/>
<circle cx="3" cy="3.5" r="2.3" fill="#3a8ae0"/><circle cx="5.5" cy="6.5" r="2.8" fill="#3a8ae0"/></svg>
<svg class="a" style="left:1148px;top:108px" width="8" height="8" viewBox="0 0 8 8"><path d="M1.5,1.5 L6.5,6.5 M6.5,1.5 L1.5,6.5" stroke="#000" stroke-width="1.9"/></svg>
<div class="a" style="left:905px;top:125px;width:247px;height:525px;border-top:1px solid #a0a0a0;border-left:1px solid #a0a0a0;border-right:1px solid #fff;border-bottom:1px solid #fff"></div>
<div class="a" style="left:906px;top:126px;width:245px;height:523px;border-top:1px solid #696969;border-left:1px solid #696969;border-right:1px solid #e3e3e3;border-bottom:1px solid #e3e3e3"></div>
<div class="a" style="left:981px;top:660px;width:96px;height:21px;background:#cccccc;border:1px solid #bcbcbc"></div>
<div class="a t" style="left:999px;top:664px;font-size:12px;color:#838383;letter-spacing:-0.5px">Echo To File</div>
<div class="a" style="left:896px;top:689px;width:264px;height:1px;background:#a0a0a0"></div>
<div class="a" style="left:896px;top:690px;width:264px;height:1px;background:#fff"></div>
<div class="a" style="left:1px;top:691px;width:1159px;height:1px;background:#e0e0e0"></div>
<div class="a" style="left:806px;top:693px;width:1px;height:16px;background:#d8d8d8"></div>
<div class="a t" style="left:811px;top:695px;font-size:12.5px;letter-spacing:0.05px">No projection, Feet (U.S. Survey)</div>
<div class="a" style="left:1158px;top:700px;width:2px;height:2px;background:#b8b8b8"></div>
<div class="a" style="left:1155px;top:703px;width:2px;height:2px;background:#b8b8b8"></div>
<div class="a" style="left:1158px;top:703px;width:2px;height:2px;background:#b8b8b8"></div>
<div class="a" style="left:1152px;top:706px;width:2px;height:2px;background:#b8b8b8"></div>
<div class="a" style="left:1155px;top:706px;width:2px;height:2px;background:#b8b8b8"></div>
<div class="a" style="left:1158px;top:706px;width:2px;height:2px;background:#b8b8b8"></div>
<svg class="a" style="left:259px;top:113px" width="16" height="16" viewBox="0 0 16 16"><path d="M8,0.5 L11.5,4 H9.3 V6.7 H12 V4.5 L15.5,8 L12,11.5 V9.3 H9.3 V12 H11.5 L8,15.5 L4.5,12 H6.7 V9.3 H4 V11.5 L0.5,8 L4,4.5 V6.7 H6.7 V4 H4.5 Z" fill="#000"/></svg>
<svg class="a" style="left:259px;top:136px" width="16" height="16" viewBox="0 0 16 16"><path d="M9.5,12 L13.5,15.5" stroke="#505050" stroke-width="2.2"/>
<circle cx="6" cy="8.2" r="5.6" fill="url(#glens)" stroke="#000" stroke-width="1.3"/>
<path d="M13.5,0.3 V3.3 M12,1.8 H15" stroke="#1a5ad0" stroke-width="1.3"/><path d="M12,4.6 H15.2" stroke="#1a5ad0" stroke-width="1.2"/></svg>
<svg class="a" style="left:259px;top:159px" width="16" height="16" viewBox="0 0 16 16"><radialGradient id="grot" cx="0.5" cy="0.5" r="0.5"><stop offset="0" stop-color="#fff"/><stop offset="0.45" stop-color="#fde080"/><stop offset="1" stop-color="#f8b020"/></radialGradient>
<path d="M8,1.6 L14.5,8.2 L8,14.8 L1.5,8.2 Z" fill="url(#grot)" stroke="#f8b020" stroke-width="1.8" stroke-linejoin="round"/>
<g fill="#000">
<path d="M5.2,0.8 Q8,-0.3 10.5,1.5 L10.5,3 L8,5.5 L5.5,3 Z"/>
<path d="M5.5,15.6 Q8,16.8 10.5,15 L10.5,13.5 L8,11 L5.5,13.5 Z"/>
<path d="M0.6,5.6 Q-0.3,8.2 1.3,10.8 L2.8,10.8 L5.2,8.2 L2.8,5.6 Z"/>
<path d="M15.4,5.6 Q16.3,8.2 14.7,10.8 L13.2,10.8 L10.8,8.2 L13.2,5.6 Z"/>
</g></svg>
<svg class="a" style="left:259px;top:182px" width="16" height="16" viewBox="0 0 16 16"><path d="M5.5,3.2 Q5.5,0.8 8,0.8 Q10.5,0.8 10.5,3 Q10.5,4.5 8.5,5.3 V7" stroke="#000" stroke-width="1.5" fill="none"/><rect x="7.6" y="8" width="1.8" height="1.6" fill="#000"/>
<path d="M1.5,6.5 H5 M11,6.5 H14.5" stroke="#2a6ac0" stroke-width="1"/><path d="M0.5,6.5 L2.5,5 V8Z M15.5,6.5 L13.5,5 V8Z" fill="#2a6ac0"/>
<rect x="0.8" y="11" width="14.4" height="4" fill="#fffbe8" stroke="#000" stroke-width="1.4"/>
<path d="M3,11 V12.5 M5,11 V12.5 M7,11 V12.5 M9,11 V12.5 M11,11 V12.5 M13,11 V12.5" stroke="#000" stroke-width="0.8"/></svg>
<svg class="a" style="left:259px;top:205px" width="16" height="16" viewBox="0 0 16 16"><rect x="0.5" y="1" width="15" height="9.5" fill="#1818b0"/>
<rect x="1.5" y="2" width="4" height="4" fill="#10a0a0"/><rect x="1.5" y="6" width="4" height="3.5" fill="#10d010"/>
<path d="M5.5,2 H10 L8,9.5 H5.5Z" fill="#a09020"/><rect x="10" y="2" width="4.5" height="2" fill="#e02020"/>
<path d="M10.5,4 H14.5 V9.5 H9Z" fill="#f0f000"/>
<path d="M9,9 V16 L10.5,14.5 L12,16.5 L13,16 L12,14 H14Z" fill="#000"/></svg>
<svg class="a" style="left:259px;top:238px" width="16" height="16" viewBox="0 0 16 16"><rect x="4" y="0" width="2" height="2" fill="#000" transform="rotate(45 5 1)"/>
<rect x="12" y="4" width="2" height="2" fill="#000" transform="rotate(45 13 5)"/>
<rect x="0.5" y="9" width="2" height="2" fill="#000" transform="rotate(45 1.5 10)"/><path d="M6.5,4.5 V12.9 L8.6,10.8 L10.175,13.950000000000001 L11.75,13.215000000000002 L10.175,10.275 H12.8 Z" fill="#000"/></svg>
<svg class="a" style="left:259px;top:260px" width="16" height="16" viewBox="0 0 16 16"><path d="M0.5,8 L8,1 L15.5,8" stroke="#000" stroke-width="1.5" fill="none"/>
<path d="M4.5,8 H6" stroke="#000" stroke-width="1.2"/><path d="M10,8 H12" stroke="#000" stroke-width="1.2"/><path d="M6.5,6 V13.6 L8.4,11.7 L9.825,14.549999999999999 L11.25,13.885000000000002 L9.825,11.225 H12.2 Z" fill="#000"/></svg>
<div class="a" style="left:258px;top:282px;width:19px;height:1px;background:#a0a0a0"></div>
<div class="a" style="left:258px;top:283px;width:19px;height:1px;background:#fff"></div>
<div class="a" style="left:256px;top:286px;width:23px;height:22px;border:1px solid #99d0f8;background:#cce4f7"></div>
<div class="a" style="left:260px;top:289px;width:16px;height:16px;background:#f0f0f0"></div>
<svg class="a" style="left:259px;top:289px" width="16" height="16" viewBox="0 0 16 16"><path d="M2.3,7.5 L8.5,3.2 L14.7,7.5" stroke="#000" stroke-width="1.2" fill="none"/>
<rect x="0.8" y="6" width="3" height="3" fill="#000" transform="rotate(45 2.3 7.5)"/>
<rect x="7" y="1.7" width="3" height="3" fill="#000" transform="rotate(45 8.5 3.2)"/>
<rect x="13.2" y="6" width="3" height="3" fill="#000" transform="rotate(45 14.7 7.5)"/></svg>
<svg class="a" style="left:259px;top:312px" width="16" height="16" viewBox="0 0 16 16"><rect x="1.8" y="1.8" width="2.4" height="2.4" fill="#000" transform="rotate(45 3 3)"/><rect x="10.8" y="4.3" width="2.4" height="2.4" fill="#000" transform="rotate(45 12 5.5)"/><rect x="4.8" y="8.3" width="2.4" height="2.4" fill="#000" transform="rotate(45 6 9.5)"/></svg>
<svg class="a" style="left:259px;top:335px" width="16" height="16" viewBox="0 0 16 16"><path d="M1.5,14.5 L8,1.5 L14.5,14.5 Z" stroke="#000" stroke-width="1.3" fill="none"/><rect x="6.8" y="0.30000000000000004" width="2.4" height="2.4" fill="#000" transform="rotate(45 8 1.5)"/><rect x="0.30000000000000004" y="13.3" width="2.4" height="2.4" fill="#000" transform="rotate(45 1.5 14.5)"/><rect x="13.3" y="13.3" width="2.4" height="2.4" fill="#000" transform="rotate(45 14.5 14.5)"/></svg>
<svg class="a" style="left:259px;top:358px" width="16" height="16" viewBox="0 0 16 16"><path d="M1.5,14.5 L8,1.5 L14.5,14.5 Z" stroke="#000" stroke-width="1.3" fill="none"/><rect x="6.8" y="0.30000000000000004" width="2.4" height="2.4" fill="#000" transform="rotate(45 8 1.5)"/><rect x="0.30000000000000004" y="13.3" width="2.4" height="2.4" fill="#000" transform="rotate(45 1.5 14.5)"/><rect x="13.3" y="13.3" width="2.4" height="2.4" fill="#000" transform="rotate(45 14.5 14.5)"/><rect x="3.5999999999999996" y="6.8" width="2.4" height="2.4" fill="#000" transform="rotate(45 4.8 8)"/><rect x="10.0" y="6.8" width="2.4" height="2.4" fill="#000" transform="rotate(45 11.2 8)"/><rect x="6.8" y="13.3" width="2.4" height="2.4" fill="#000" transform="rotate(45 8 14.5)"/></svg>
<svg class="a" style="left:259px;top:381px" width="16" height="16" viewBox="0 0 16 16"><rect x="1.5" y="1.5" width="13" height="13" stroke="#000" stroke-width="1.3" fill="none"/><rect x="0.30000000000000004" y="0.30000000000000004" width="2.4" height="2.4" fill="#000" transform="rotate(45 1.5 1.5)"/><rect x="13.3" y="0.30000000000000004" width="2.4" height="2.4" fill="#000" transform="rotate(45 14.5 1.5)"/><rect x="0.30000000000000004" y="13.3" width="2.4" height="2.4" fill="#000" transform="rotate(45 1.5 14.5)"/><rect x="13.3" y="13.3" width="2.4" height="2.4" fill="#000" transform="rotate(45 14.5 14.5)"/></svg>
<svg class="a" style="left:259px;top:404px" width="16" height="16" viewBox="0 0 16 16"><rect x="1.5" y="1.5" width="13" height="13" stroke="#000" stroke-width="1.3" fill="none"/><rect x="0.30000000000000004" y="0.30000000000000004" width="2.4" height="2.4" fill="#000" transform="rotate(45 1.5 1.5)"/><rect x="13.3" y="0.30000000000000004" width="2.4" height="2.4" fill="#000" transform="rotate(45 14.5 1.5)"/><rect x="0.30000000000000004" y="13.3" width="2.4" height="2.4" fill="#000" transform="rotate(45 1.5 14.5)"/><rect x="13.3" y="13.3" width="2.4" height="2.4" fill="#000" transform="rotate(45 14.5 14.5)"/><rect x="6.8" y="0.30000000000000004" width="2.4" height="2.4" fill="#000" transform="rotate(45 8 1.5)"/><rect x="6.8" y="13.3" width="2.4" height="2.4" fill="#000" transform="rotate(45 8 14.5)"/><rect x="0.30000000000000004" y="6.8" width="2.4" height="2.4" fill="#000" transform="rotate(45 1.5 8)"/><rect x="13.3" y="6.8" width="2.4" height="2.4" fill="#000" transform="rotate(45 14.5 8)"/></svg>
<svg class="a" style="left:259px;top:427px" width="16" height="16" viewBox="0 0 16 16"><path d="M5,0.8 L8.8,4.5 L5,8.2 L1.2,4.5 Z M1.2,4.5 H8.8" stroke="#f00" stroke-width="1.3" fill="none"/>
<rect x="8.5" y="9.5" width="6" height="5.5" stroke="#f00" stroke-width="1.3" fill="none"/>
<path d="M9,2 L12.5,5.5 M12.5,3 V5.5 H10" stroke="#000" stroke-width="1.1" fill="none"/>
<path d="M7,12 L3.5,8.5 M3.5,11 V8.5 H6" stroke="#000" stroke-width="1.1" fill="none"/></svg>
<svg class="a" style="left:259px;top:450px" width="16" height="16" viewBox="0 0 16 16"><path d="M0,0 H7 V7 Z" fill="#000"/><path d="M0,0 H7 L0,7 Z" fill="#fff"/>
<path d="M0.6,7 V0.6 H7 M0.6,7 L7,0.6" stroke="#f00" stroke-width="1.2" fill="none"/>
<path d="M7,7 H0 L7,0Z" fill="#000"/>
<path d="M9,9 H16 V16 Z" fill="#fff"/><path d="M9,9 V16 H16 Z" fill="#000"/>
<path d="M9,9.6 H15.4 V16 M9,9 L16,16" stroke="#f00" stroke-width="1.2" fill="none"/>
<path d="M2,8 L6,12" stroke="#000" stroke-width="1.4"/><path d="M7,8.5 V13 H2.5 Z" fill="#000"/></svg>
<svg class="a" style="left:259px;top:473px" width="16" height="16" viewBox="0 0 16 16"><rect x="0" y="0" width="16" height="16" fill="#00f000"/>
<path d="M0,2.5 Q8,-1.5 16,7" stroke="#000" stroke-width="1.3" fill="none"/>
<path d="M0,11 Q5,12 7.5,16" stroke="#000" stroke-width="1.3" fill="none"/>
<path d="M13.8,13 L15.3,16" stroke="#000" stroke-width="1.3"/>
<text x="8.6" y="11.8" text-anchor="middle" font-size="10" font-weight="bold" font-family="Liberation Sans" fill="#000" transform="rotate(48 8.5 8.5)">10</text></svg>
<div class="a" style="left:17px;top:138px;width:1px;height:78px;background:repeating-linear-gradient(180deg,#6e6e6e 0 1px,transparent 1px 2px)"></div>
<div class="a" style="left:22px;top:148px;width:6px;height:1px;background:repeating-linear-gradient(90deg,#6e6e6e 0 1px,transparent 1px 2px)"></div>
<div class="a" style="left:22px;top:184px;width:6px;height:1px;background:repeating-linear-gradient(90deg,#6e6e6e 0 1px,transparent 1px 2px)"></div>
<div class="a" style="left:22px;top:220px;width:6px;height:1px;background:repeating-linear-gradient(90deg,#6e6e6e 0 1px,transparent 1px 2px)"></div>
<div class="a" style="left:36px;top:156px;width:1px;height:10px;background:repeating-linear-gradient(180deg,#6e6e6e 0 1px,transparent 1px 2px)"></div>
<div class="a" style="left:36px;top:166px;width:11px;height:1px;background:repeating-linear-gradient(90deg,#6e6e6e 0 1px,transparent 1px 2px)"></div>
<div class="a" style="left:36px;top:192px;width:1px;height:10px;background:repeating-linear-gradient(180deg,#6e6e6e 0 1px,transparent 1px 2px)"></div>
<div class="a" style="left:36px;top:202px;width:11px;height:1px;background:repeating-linear-gradient(90deg,#6e6e6e 0 1px,transparent 1px 2px)"></div>
<div class="a" style="left:36px;top:228px;width:1px;height:10px;background:repeating-linear-gradient(180deg,#6e6e6e 0 1px,transparent 1px 2px)"></div>
<div class="a" style="left:36px;top:238px;width:11px;height:1px;background:repeating-linear-gradient(90deg,#6e6e6e 0 1px,transparent 1px 2px)"></div>
<div class="a" style="left:13px;top:144px;width:9px;height:9px;border:1px solid #a8a8a8;border-radius:1px;background:linear-gradient(#fff,#e4e4e4)"></div>
<div class="a" style="left:15px;top:148px;width:5px;height:1px;background:#3050a0"></div>
<div class="a" style="left:13px;top:180px;width:9px;height:9px;border:1px solid #a8a8a8;border-radius:1px;background:linear-gradient(#fff,#e4e4e4)"></div>
<div class="a" style="left:15px;top:184px;width:5px;height:1px;background:#3050a0"></div>
<div class="a" style="left:13px;top:216px;width:9px;height:9px;border:1px solid #a8a8a8;border-radius:1px;background:linear-gradient(#fff,#e4e4e4)"></div>
<div class="a" style="left:15px;top:220px;width:5px;height:1px;background:#3050a0"></div>
<div class="a" style="left:28px;top:175px;width:13px;height:13px;border:2px solid #000;background:#fff"></div>
<svg class="a" style="left:28px;top:175px" width="13" height="13" viewBox="0 0 13 13"><path d="M3,6.5 L5.3,9 L10,3.8" stroke="#000" stroke-width="1.7" fill="none"/></svg>
<div class="a" style="left:47px;top:193px;width:13px;height:13px;border:2px solid #000;background:#fff"></div>
<svg class="a" style="left:47px;top:193px" width="13" height="13" viewBox="0 0 13 13"><path d="M3,6.5 L5.3,9 L10,3.8" stroke="#000" stroke-width="1.7" fill="none"/></svg>
<div class="a" style="left:28px;top:211px;width:13px;height:13px;border:2px solid #000;background:#fff"></div>
<svg class="a" style="left:28px;top:211px" width="13" height="13" viewBox="0 0 13 13"><path d="M3,6.5 L5.3,9 L10,3.8" stroke="#000" stroke-width="1.7" fill="none"/></svg>
<div class="a" style="left:47px;top:229px;width:13px;height:13px;border:2px solid #000;background:#fff"></div>
<svg class="a" style="left:47px;top:229px" width="13" height="13" viewBox="0 0 13 13"><path d="M3,6.5 L5.3,9 L10,3.8" stroke="#000" stroke-width="1.7" fill="none"/></svg>
<svg class="a" style="left:11px;top:123px" width="12" height="12" viewBox="0 0 12 12"><path d="M3.5,0.5 H8.5 L11.5,3.5 V8.5 L8.5,11.5 H3.5 L0.5,8.5 V3.5 Z" fill="#d8d4c8" stroke="#333" stroke-width="1"/></svg>
<svg class="a" style="left:28px;top:139px" width="16" height="16" viewBox="0 0 16 16"><path d="M0.5,0.5 H6.5 V2.5 H13.5 V12 H0.5 Z" fill="#f2e498" stroke="#a89870"/><rect x="1" y="1" width="5" height="1.5" fill="#f8f0b0"/><path d="M1,3 H13" stroke="#b8a878" stroke-width="0.8"/></svg>
<svg class="a" style="left:28px;top:139px" width="16" height="16" viewBox="0 0 16 16"><rect x="5.5" y="4.5" width="9" height="11" fill="#f8f8f8" stroke="#888"/>
<path d="M6,13 Q8,8.5 12,8 L13,9.5 Q11,13 6,13.5Z" fill="#6aa8f0"/><path d="M6,13.5 H13" stroke="#2060d0" stroke-width="1"/><path d="M12,9 L15.5,4.5" stroke="#e0b020" stroke-width="1.8"/></svg>
<div class="a" style="left:47px;top:138px;width:79px;height:18px;background:#f0f0f0"></div>
<svg class="a" style="left:48px;top:158px" width="16" height="16" viewBox="0 0 16 16"><rect x="0.5" y="1.5" width="8" height="11" fill="#fff" stroke="#aaa"/>
<rect x="2.5" y="2.5" width="8" height="11" fill="#fff" stroke="#aaa"/>
<rect x="4.5" y="3.5" width="9" height="11" fill="#f4f4f4" stroke="#888"/>
<path d="M5,13.5 Q7,8.5 10.5,8 L11.5,9 Q9,13.5 5,13.5Z" fill="#4a90e0"/><path d="M10.5,9 L14.5,4" stroke="#e0b020" stroke-width="1.6"/></svg>
<svg class="a" style="left:43px;top:175px" width="16" height="16" viewBox="0 0 16 16"><path d="M0.5,0.5 H6.5 V2.5 H13.5 V12 H0.5 Z" fill="#f2e498" stroke="#a89870"/><rect x="1" y="1" width="5" height="1.5" fill="#f8f0b0"/><path d="M1,3 H13" stroke="#b8a878" stroke-width="0.8"/></svg>
<svg class="a" style="left:46px;top:178px" width="13" height="13" viewBox="0 0 16 16"><path d="M3.6,0.5 H9.6 L11.5,2.3 H15.2 V12.1 L13,14.2 H8.4 L3.6,14.9 L0.6,11.8 V3.5 Z" fill="#f8b030"/>
<path d="M0.6,4 L3.6,7 H7.6 V14.6 H3.6 L0.6,11.8Z" fill="#f8a828"/>
<path d="M7.6,7 L8.4,6.6 H12.5 V14 H8.4 L7.6,14.6Z" fill="url(#gorange)"/>
<path d="M12.5,6.5 L15.2,3.6 V12.1 L13,14 H12.5Z" fill="#d84a10"/>
<path d="M3.6,0.5 H9.6 L11.5,2.3 H15.2 V12.1 L13,14.2 H8.4 L3.6,14.9 L0.6,11.8 V3.5 Z" fill="none" stroke="#000" stroke-width="1.2" stroke-linejoin="round"/>
<path d="M0.6,4 L3.6,7 H7.6 L8.4,6.6 H12.5 L15.2,3.6 M7.6,7 V14.6 M12.5,6.6 V14" stroke="#000" stroke-width="1.1" fill="none"/></svg>
<svg class="a" style="left:62px;top:193px" width="16" height="16" viewBox="0 0 16 16"><path d="M3.6,0.5 H9.6 L11.5,2.3 H15.2 V12.1 L13,14.2 H8.4 L3.6,14.9 L0.6,11.8 V3.5 Z" fill="#f8b030"/>
<path d="M0.6,4 L3.6,7 H7.6 V14.6 H3.6 L0.6,11.8Z" fill="#f8a828"/>
<path d="M7.6,7 L8.4,6.6 H12.5 V14 H8.4 L7.6,14.6Z" fill="url(#gorange)"/>
<path d="M12.5,6.5 L15.2,3.6 V12.1 L13,14 H12.5Z" fill="#d84a10"/>
<path d="M3.6,0.5 H9.6 L11.5,2.3 H15.2 V12.1 L13,14.2 H8.4 L3.6,14.9 L0.6,11.8 V3.5 Z" fill="none" stroke="#000" stroke-width="1.2" stroke-linejoin="round"/>
<path d="M0.6,4 L3.6,7 H7.6 L8.4,6.6 H12.5 L15.2,3.6 M7.6,7 V14.6 M12.5,6.6 V14" stroke="#000" stroke-width="1.1" fill="none"/></svg>
<svg class="a" style="left:43px;top:211px" width="16" height="16" viewBox="0 0 16 16"><path d="M0.5,0.5 H6.5 V2.5 H13.5 V12 H0.5 Z" fill="#f2e498" stroke="#a89870"/><rect x="1" y="1" width="5" height="1.5" fill="#f8f0b0"/><path d="M1,3 H13" stroke="#b8a878" stroke-width="0.8"/></svg>
<svg class="a" style="left:47px;top:214px" width="12" height="13" viewBox="0 0 16 16" preserveAspectRatio="none"><linearGradient id="gmesh2" x1="0" y1="0" x2="1" y2="0"><stop offset="0.3" stop-color="#a8dcf0"/><stop offset="0.6" stop-color="#90b0e8"/><stop offset="1" stop-color="#7890e0"/></linearGradient>
<path d="M6.9,0.6 L14.6,7.3 V15.3 H3.5 V11.3 L0.7,6 Z" fill="url(#gmesh2)" stroke="#000" stroke-width="1.3" stroke-linejoin="round"/>
<path d="M0.7,6 L10,9.8 M6.9,0.6 L10,9.8 M10,9.8 L14.5,8.6 M10,9.8 L13,15.3 M10,9.8 L7,15.3 M3,4 L5.6,15 M5,2.3 L8.2,9 M1.8,8.5 L8,3.2 M3.5,11.3 L9.3,6.5" stroke="#000" stroke-width="0.85" fill="none"/></svg>
<svg class="a" style="left:63px;top:229px" width="16" height="16" viewBox="0 0 16 16"><linearGradient id="gmesh" x1="0" y1="0" x2="1" y2="0"><stop offset="0.3" stop-color="#a8dcf0"/><stop offset="0.6" stop-color="#90b0e8"/><stop offset="1" stop-color="#7890e0"/></linearGradient>
<path d="M6.9,0.6 L14.6,7.3 V15.3 H3.5 V11.3 L0.7,6 Z" fill="url(#gmesh)" stroke="#000" stroke-width="1.3" stroke-linejoin="round"/>
<path d="M0.7,6 L10,9.8 M6.9,0.6 L10,9.8 M10,9.8 L14.5,8.6 M10,9.8 L13,15.3 M10,9.8 L7,15.3 M3,4 L5.6,15 M5,2.3 L8.2,9 M1.8,8.5 L8,3.2 M3.5,11.3 L9.3,6.5" stroke="#000" stroke-width="0.85" fill="none"/></svg>
<div class="a t" style="left:30px;top:122px;font-size:11px;letter-spacing:-0.3px;">Project</div>
<div class="a t" style="left:49px;top:140px;font-size:11px;letter-spacing:-0.3px;">Display Themes</div>
<div class="a t" style="left:68px;top:158px;font-size:11px;letter-spacing:-0.3px;">Display (1)</div>
<div class="a t" style="left:64px;top:176px;font-size:11px;letter-spacing:-0.3px;">Solid Data</div>
<div class="a t" style="left:83px;top:194px;font-size:11px;letter-spacing:-0.3px;">New Cube</div>
<div class="a t" style="left:64px;top:212px;font-size:11px;letter-spacing:-0.3px;">2D Mesh Data</div>
<div class="a t" style="left:82px;top:230px;font-size:11px;letter-spacing:-0.3px;font-weight:bold;letter-spacing:0.1px">mesh</div>
</body></html>
